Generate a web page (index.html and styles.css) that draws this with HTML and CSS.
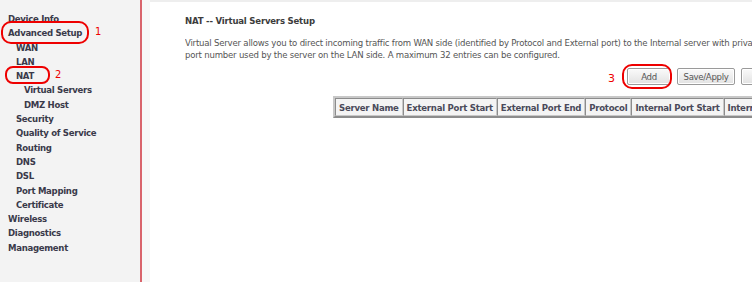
FILE: index.html
```html
<!DOCTYPE html>
<html lang="en">
<head>
  <meta charset="UTF-8">
  <title>NAT -- Virtual Servers Setup</title>
  <link rel="stylesheet" href="styles.css">
</head>
<body>
  <div class="page">
    <aside class="menu">
      <a class="lvl0">Device Info</a>
      <a class="lvl0">Advanced Setup</a>
      <a class="lvl1">WAN</a>
      <a class="lvl1">LAN</a>
      <a class="lvl1">NAT</a>
      <a class="lvl2">Virtual Servers</a>
      <a class="lvl2">DMZ Host</a>
      <a class="lvl1">Security</a>
      <a class="lvl1">Quality of Service</a>
      <a class="lvl1">Routing</a>
      <a class="lvl1">DNS</a>
      <a class="lvl1">DSL</a>
      <a class="lvl1">Port Mapping</a>
      <a class="lvl1">Certificate</a>
      <a class="lvl0">Wireless</a>
      <a class="lvl0">Diagnostics</a>
      <a class="lvl0">Management</a>
    </aside>
    <div class="gutter"></div>
    <main class="content">
      <h1>NAT -- Virtual Servers Setup</h1>
      <p class="intro">Virtual Server allows you to direct incoming traffic from WAN side (identified by Protocol and External port) to the Internal server with private IP address on the LAN side.<br>port number used by the server on the LAN side. A maximum 32 entries can be configured.</p>

      <div class="actions">
        <span class="step-num">3</span>
        <button class="btn btn-add">Add</button>
        <button class="btn btn-save">Save/Apply</button>
        <button class="btn btn-cut">Remove</button>
      </div>

      <table class="servers">
        <tr>
          <th>Server Name</th>
          <th>External Port Start</th>
          <th>External Port End</th>
          <th>Protocol</th>
          <th>Internal Port Start</th>
          <th>Internal Port End</th>
        </tr>
      </table>
    </main>
  </div>

  <span class="ring ring-adv"></span><span class="note note-1">1</span>
  <span class="ring ring-nat"></span><span class="note note-2">2</span>
  <span class="ring ring-add"></span>
</body>
</html>
```

FILE: styles.css
```css
* { margin: 0; padding: 0; box-sizing: border-box; }
html, body { width: 752px; height: 282px; overflow: hidden; }
body { background: #fff; font-family: Tahoma, "DejaVu Sans Condensed", "DejaVu Sans", sans-serif; font-stretch: condensed; color: #3c3c3c; position: relative; }

.page { display: flex; height: 282px; }

.menu { width: 142px; flex: none; background: #f3f3f3; border-right: 2px solid #d9646c; padding-top: 12px; display: flex; flex-direction: column; }
.menu a { display: block; font-size: 9.5px; font-weight: bold; line-height: 14.3px; color: #3a3a4a; white-space: nowrap; letter-spacing: -0.3px; }
.menu .lvl0 { padding-left: 8px; }
.menu .lvl1 { padding-left: 16px; }
.menu .lvl2 { padding-left: 24px; }

.gutter { width: 8px; flex: none; background: #f7f7f7; }

.content { flex: 1; padding: 13px 0 0 35px; overflow: hidden; border-top: 2px solid #eeeeee; }
.content h1 { font-size: 9.5px; font-weight: bold; color: #3c3c3c; line-height: 12px; letter-spacing: -0.2px; }
.intro { margin-top: 10px; font-size: 9.5px; line-height: 12px; color: #555; white-space: nowrap; height: 24px; overflow: hidden; letter-spacing: -0.2px; }

.actions { display: flex; align-items: center; gap: 6px; margin: 6px 0 0 423px; white-space: nowrap; }
.actions > * { flex: none; }
.step-num { color: #e00; font-size: 11px; font-family: "DejaVu Sans", sans-serif; font-stretch: normal; margin-right: 6px; margin-top: 5px; width: 7px; }
.btn { height: 17px; padding: 0 4px; font-family: inherit; font-stretch: condensed; font-size: 9.5px; color: #555; letter-spacing: -0.3px; background: linear-gradient(#fafafa, #e2e2e2); border: 1px solid #9a9a9a; border-radius: 2px; box-shadow: inset 0 0 0 1px #fff; }
.btn-add { width: 44px; }
.btn-save { width: 58px; }
.btn-cut { width: 40px; overflow: hidden; text-align: left; padding-left: 12px; }

.servers { margin: 11px 0 0 148px; border-collapse: separate; border-spacing: 0; border: 2px solid; border-color: #c8c8c8 #8c8c8c #8c8c8c #c8c8c8; white-space: nowrap; }
.servers th { font-size: 9.5px; font-weight: bold; color: #4a4a5a; letter-spacing: -0.25px; height: 18px; padding: 0 3px; border: 1px solid; border-color: #8c8c8c #c8c8c8 #c8c8c8 #8c8c8c; background: #f4f4f4; }

.ring { position: absolute; border: 2px solid #ee0000; border-radius: 10px; }
.ring-adv { left: 1px; top: 21px; width: 88px; height: 23px; }
.ring-nat { left: 5px; top: 66px; width: 45px; height: 18px; border-radius: 8px; }
.ring-add { left: 622px; top: 64px; width: 50px; height: 25px; }
.note { position: absolute; color: #e00; font-size: 11px; font-family: "DejaVu Sans", sans-serif; }
.note-1 { left: 95px; top: 25px; }
.note-2 { left: 55px; top: 68px; }
```
